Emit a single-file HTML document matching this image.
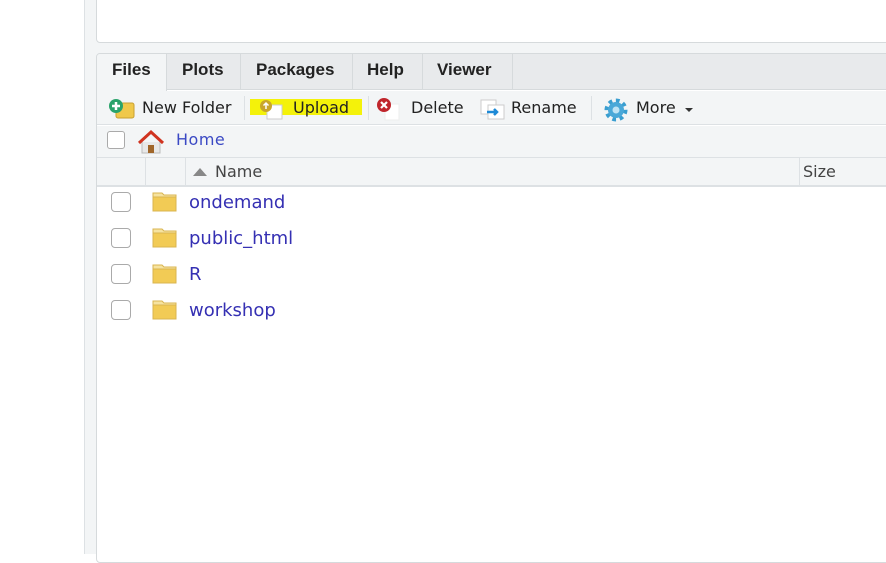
<!DOCTYPE html>
<html><head><style>
*{margin:0;padding:0;box-sizing:border-box}
body{width:886px;height:554px;overflow:hidden;background:#fff;font-family:"DejaVu Sans","Liberation Sans",sans-serif;position:relative}
.a{position:absolute}
</style></head><body>
<div class="a" style="left:84px;top:0;width:1px;height:554px;background:#dde1e4"></div>
<div class="a" style="left:85px;top:0;width:801px;height:554px;background:#f3f5f6"></div>
<!-- top pane -->
<div class="a" style="left:96px;top:-4px;width:800px;height:47px;background:#fff;border:1px solid #d6dadc;border-radius:4px"></div>
<!-- bottom pane -->
<div class="a" style="left:96px;top:53px;width:800px;height:510px;background:#fff;border:1px solid #d6dadc;border-radius:4px;overflow:hidden">
 <div class="a" style="left:0;top:0;width:800px;height:36px;background:#e8eaec;border-bottom:1px solid #d6dadc"></div>
 <div class="a" style="left:0;top:0;width:70px;height:37px;background:#f3f5f6;border-right:1px solid #d6dadc;font-weight:bold;font-size:17px;color:#222;padding:6px 0 0 15px;font-family:'Liberation Sans',sans-serif">Files</div>
 <div class="a" style="left:70px;top:0;width:74px;height:36px;border-right:1px solid #d6dadc;font-weight:bold;font-size:17px;color:#222;padding:6px 0 0 15px;font-family:'Liberation Sans',sans-serif">Plots</div>
 <div class="a" style="left:144px;top:0;width:112px;height:36px;border-right:1px solid #d6dadc;font-weight:bold;font-size:17px;color:#222;padding:6px 0 0 15px;font-family:'Liberation Sans',sans-serif">Packages</div>
 <div class="a" style="left:256px;top:0;width:70px;height:36px;border-right:1px solid #d6dadc;font-weight:bold;font-size:17px;color:#222;padding:6px 0 0 14px;font-family:'Liberation Sans',sans-serif">Help</div>
 <div class="a" style="left:326px;top:0;width:90px;height:36px;border-right:1px solid #d6dadc;font-weight:bold;font-size:17px;color:#222;padding:6px 0 0 14px;font-family:'Liberation Sans',sans-serif">Viewer</div>
 <!-- toolbar -->
 <div class="a" style="left:0;top:37px;width:800px;height:34px;background:#f3f5f6;border-bottom:1px solid #dde1e4;font-size:16px;color:#222">
  <svg class="a" style="left:11px;top:7px" width="28" height="22"><rect x="8" y="5" width="18" height="15" rx="2" fill="#f0c84a" stroke="#c9a030"/><circle cx="8" cy="8" r="7" fill="#2aa36b"/><path d="M8 4v8M4 8h8" stroke="#fff" stroke-width="2.5"/></svg>
  <span class="a" style="left:45px;top:7px">New Folder</span>
  <div class="a" style="left:147px;top:5px;width:1px;height:24px;background:#dde1e4"></div>
  <div class="a" style="left:153px;top:8px;width:112px;height:16px;background:#f4f20a"></div>
  <svg class="a" style="left:160px;top:6px" width="30" height="24"><rect x="10" y="8" width="15" height="14" fill="#fff" stroke="#ccc"/><circle cx="9" cy="9" r="6" fill="#c9a62a"/><path d="M9 6v6M6.5 8.5L9 6l2.5 2.5" stroke="#fff" stroke-width="1.5" fill="none"/></svg>
  <span class="a" style="left:196px;top:7px">Upload</span>
  <div class="a" style="left:271px;top:5px;width:1px;height:24px;background:#dde1e4"></div>
  <svg class="a" style="left:278px;top:5px" width="30" height="26"><rect x="10" y="8" width="14" height="16" fill="#fff" stroke="#eee"/><circle cx="9" cy="9" r="7" fill="#c0262c"/><path d="M6 6l6 6M12 6l-6 6" stroke="#fff" stroke-width="2.2"/></svg>
  <span class="a" style="left:314px;top:7px">Delete</span>
  <svg class="a" style="left:383px;top:7px" width="26" height="22"><rect x="1" y="2" width="15" height="14" fill="#fff" stroke="#ccc"/><rect x="8" y="7" width="16" height="14" fill="#fff" stroke="#ccc"/><path d="M7 14h10M14 11l3 3-3 3" stroke="#1e8ad6" stroke-width="2.5" fill="none"/></svg>
  <span class="a" style="left:414px;top:7px">Rename</span>
  <div class="a" style="left:494px;top:5px;width:1px;height:24px;background:#dde1e4"></div>
  <svg class="a" style="left:506px;top:6px" width="26" height="26"><circle cx="13" cy="13" r="9" fill="none" stroke="#3a9ed0" stroke-width="5" stroke-dasharray="3.5 3.5"/><circle cx="13" cy="13" r="8" fill="#4aa8d8"/><circle cx="13" cy="13" r="3.5" fill="#bfe3f4"/></svg>
  <span class="a" style="left:539px;top:7px">More</span>
  <svg class="a" style="left:588px;top:17px" width="8" height="5"><path d="M0 0h8L4 4z" fill="#333"/></svg>
 </div>
 <!-- home row -->
 <div class="a" style="left:0;top:72px;width:800px;height:32px;background:#f3f5f6;border-bottom:1px solid #dde1e4"></div>
 <div class="a" style="left:10px;top:77px;width:18px;height:18px;border:1px solid #aaa;border-radius:3px;background:#fff"></div>
 <svg class="a" style="left:40px;top:75px" width="28" height="26"><path d="M5 13v11h18V13" fill="#e8e8e8" stroke="#bbb"/><rect x="11" y="16" width="6" height="8" fill="#a0662a"/><path d="M2 14L14 3l12 11" fill="none" stroke="#d0331f" stroke-width="3"/></svg>
 <span class="a" style="left:79px;top:76px;font-size:16px;color:#3b49c4;letter-spacing:0.5px">Home</span>
 <!-- header -->
 <div class="a" style="left:0;top:104px;width:800px;height:29px;background:#f3f5f6;border-bottom:2px solid #dde1e4"></div>
 <div class="a" style="left:48px;top:104px;width:1px;height:29px;background:#dde1e4"></div>
 <div class="a" style="left:88px;top:104px;width:1px;height:29px;background:#dde1e4"></div>
 <div class="a" style="left:702px;top:104px;width:1px;height:29px;background:#dde1e4"></div>
 <svg class="a" style="left:96px;top:113px" width="14" height="10"><path d="M0 9L7 1l7 8z" fill="#888"/></svg>
 <span class="a" style="left:118px;top:108px;font-size:16px;color:#444">Name</span>
 <span class="a" style="left:706px;top:108px;font-size:16px;color:#444">Size</span>
</div>
<!-- rows -->
<div class="a" style="left:0;top:0">
 <div class="a" style="left:111px;top:192px;width:20px;height:20px;border:1px solid #aaa;border-radius:4px"></div>
 <div class="a" style="left:111px;top:228px;width:20px;height:20px;border:1px solid #aaa;border-radius:4px"></div>
 <div class="a" style="left:111px;top:264px;width:20px;height:20px;border:1px solid #aaa;border-radius:4px"></div>
 <div class="a" style="left:111px;top:300px;width:20px;height:20px;border:1px solid #aaa;border-radius:4px"></div>
</div>
<svg class="a" style="left:152px;top:190px" width="26" height="130">
 <g id="f"><path d="M1 3h9l2 2h12v15H1z" fill="#f6e3a0" stroke="#d9b450"/><rect x="1" y="7" width="23" height="14" fill="#f2cb55" stroke="#d9b450"/></g>
 <use href="#f" y="36"/><use href="#f" y="72"/><use href="#f" y="108"/>
</svg>
<div class="a" style="left:189px;top:192px;font-size:18px;color:#3530b3;line-height:22px">ondemand</div>
<div class="a" style="left:189px;top:228px;font-size:18px;color:#3530b3;line-height:22px">public_html</div>
<div class="a" style="left:189px;top:264px;font-size:18px;color:#3530b3;line-height:22px">R</div>
<div class="a" style="left:189px;top:300px;font-size:18px;color:#3530b3;line-height:22px">workshop</div>
</body></html>
